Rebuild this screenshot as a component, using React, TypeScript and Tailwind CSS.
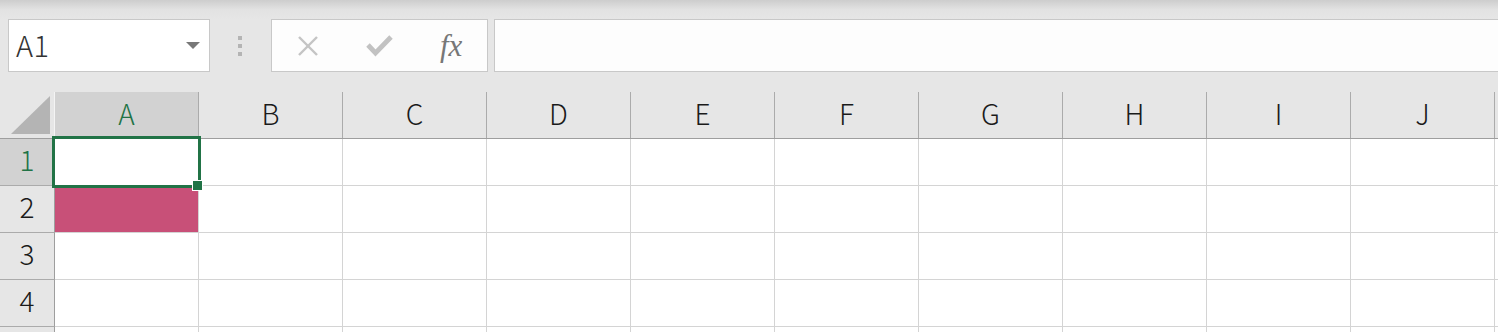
import React from "react";

const COLS = ["A", "B", "C", "D", "E", "F", "G", "H", "I", "J", ""];
const ROWS = [1, 2, 3, 4, 5];

export default function App() {
  return (
    <div
      className="relative w-[1498px] h-[332px] overflow-hidden bg-[#e6e6e6] text-[#1a1a1a]"
      style={{ fontFamily: '"Noto Sans CJK JP", "Noto Sans", sans-serif' }}
    >
      {/* top shade */}
      <div className="h-[19px] bg-gradient-to-b from-[#cdcdcd] via-[#e2e2e2] to-[#e6e6e6]" />

      {/* formula toolbar */}
      <div className="flex h-[53px] pl-[8px]">
        <div className="w-[202px] h-full flex items-center justify-between border border-[#c8c8c8] bg-white pl-[7px] pr-[9px]">
          <span className="text-[29px] font-light leading-none text-[#333] tracking-[0.5px] pb-[2px]">A1</span>
          <svg width="14" height="8" viewBox="0 0 14 8">
            <polygon points="0,0 14,0 7,7" fill="#787878" />
          </svg>
        </div>
        <div className="w-[61px] h-full flex items-center">
          <div className="ml-[28px] flex flex-col gap-[4px]">
            <div className="w-[4px] h-[4px] bg-[#b4b4b4]" />
            <div className="w-[4px] h-[4px] bg-[#b4b4b4]" />
            <div className="w-[4px] h-[4px] bg-[#b4b4b4]" />
          </div>
        </div>
        <div className="w-[217px] h-full flex border border-[#c8c8c8] bg-[#fdfdfd]">
          <div className="w-[72px] h-full flex items-center justify-center">
            <svg width="22" height="20" viewBox="0 0 22 20">
              <line x1="2" y1="1" x2="20" y2="19" stroke="#c4c4c4" strokeWidth="2.4" />
              <line x1="20" y1="1" x2="2" y2="19" stroke="#c4c4c4" strokeWidth="2.4" />
            </svg>
          </div>
          <div className="w-[72px] h-full flex items-center justify-center">
            <svg width="27" height="22" viewBox="0 0 27 22">
              <polyline
                points="2,10 9.5,18 25,2"
                fill="none"
                stroke="#c2c2c2"
                strokeWidth="4.8"
                strokeLinejoin="miter"
              />
            </svg>
          </div>
          <div className="w-[72px] h-full flex items-center justify-center">
            <span
              className="italic text-[31px] leading-none text-[#777]"
              style={{ fontFamily: '"Liberation Serif", serif' }}
            >
              fx
            </span>
          </div>
        </div>
        <div className="ml-[6px] flex-1 h-full border border-r-0 border-[#c8c8c8] bg-[#fdfdfd]" />
      </div>

      {/* spacer */}
      <div className="h-[20px]" />

      {/* grid */}
      <div className="relative">
        {/* header row */}
        <div className="flex h-[47px] border-b border-[#9e9e9e]">
          <div className="w-[55px] shrink-0 h-full flex items-end justify-end pr-[3px] pb-[3px] border-r border-[#f4f4f4]">
            <svg width="40" height="39" viewBox="0 0 40 39">
              <polygon points="39,0 39,38 0,38" fill="#b4b4b4" />
            </svg>
          </div>
          {COLS.map((c, i) => (
            <div
              key={i}
              className={`w-[144px] shrink-0 h-full flex items-center justify-center border-r border-[#ababab] text-[28px] font-light leading-none pb-[4px] ${
                i === 0 ? "bg-[#d2d2d2] text-[#217346]" : "text-[#1a1a1a]"
              }`}
            >
              {c}
            </div>
          ))}
        </div>

        {/* body rows */}
        {ROWS.map((r) => (
          <div key={r} className="flex h-[47px]">
            <div
              className={`w-[55px] shrink-0 h-full flex items-center justify-center border-r border-b border-r-[#9e9e9e] border-b-[#ababab] text-[28px] font-light leading-none pb-[7px] ${
                r === 1 ? "bg-[#d2d2d2] text-[#217346]" : "text-[#1a1a1a]"
              }`}
            >
              {r < 5 ? r : ""}
            </div>
            {COLS.map((c, i) => (
              <div
                key={i}
                className={`w-[144px] shrink-0 h-full border-r border-b border-[#d4d4d4] ${
                  r === 2 && i === 0 ? "bg-[#c85078]" : "bg-white"
                }`}
              />
            ))}
          </div>
        ))}

        {/* selection */}
        <div className="absolute left-[52px] top-[44px] w-[149px] h-[52px] border-[3px] border-[#217346]" />
        <div className="absolute left-[192px] top-[88px] w-[11px] h-[11px] bg-[#217346] border border-white" />
      </div>
    </div>
  );
}
